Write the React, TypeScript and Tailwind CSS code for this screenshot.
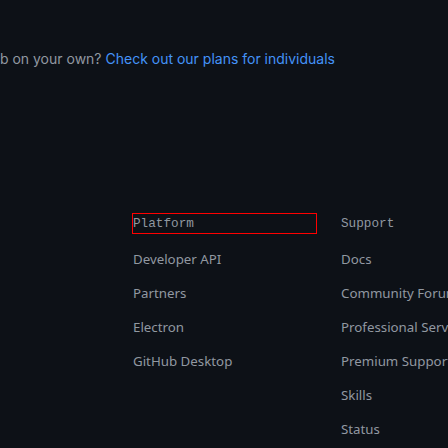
import React from "react";

// footer link columns, shown below the plans banner
const platformLinks = ["Developer API", "Partners", "Electron", "GitHub Desktop"];
const supportLinks = [
  "Docs",
  "Community Forum",
  "Professional Services",
  "Premium Support",
  "Skills",
  "Status",
];

function LinkColumn({
  title,
  links,
  focused,
}: {
  title: string;
  links: string[];
  focused?: boolean;
}) {
  return (
    <div className="w-[208px] shrink-0">
      <h2
        className={
          "h-[21px] flex items-center text-[12.7px] text-[#9198a1] whitespace-nowrap " +
          (focused ? "w-[185px] border border-[#ff0000] -ml-px" : "")
        }
        style={{ fontFamily: '"Liberation Mono", "DejaVu Sans Mono", monospace' }}
      >
        {title}
      </h2>
      <ul className="mt-[15px] flex flex-col gap-[13px]">
        {links.map((l) => (
          <li
            key={l}
            className="h-[21px] leading-[21px] text-[13.3px] text-[#9198a1] whitespace-nowrap"
            style={{ fontFamily: '"Noto Sans", "Open Sans", sans-serif' }}
          >
            {l}
          </li>
        ))}
      </ul>
    </div>
  );
}

export default function App() {
  return (
    <div className="w-[448px] h-[448px] overflow-hidden bg-[#0d1117]">
      {/* banner line, cut off on the left */}
      <div className="pt-[48px] w-[335px] flex justify-end">
        <p
          className="whitespace-nowrap text-[14px] leading-[21px] text-[#9198a1] shrink-0"
          style={{ fontFamily: "Inter, sans-serif" }}
        >
          Want to use GitHub on your own?{" "}
          <span className="text-[#4493f8]">Check out our plans for individuals</span>
        </p>
      </div>

      <div className="mt-[144px] pl-[133px] flex">
        <LinkColumn title="Platform" links={platformLinks} focused />
        <LinkColumn title="Support" links={supportLinks} />
      </div>
    </div>
  );
}
